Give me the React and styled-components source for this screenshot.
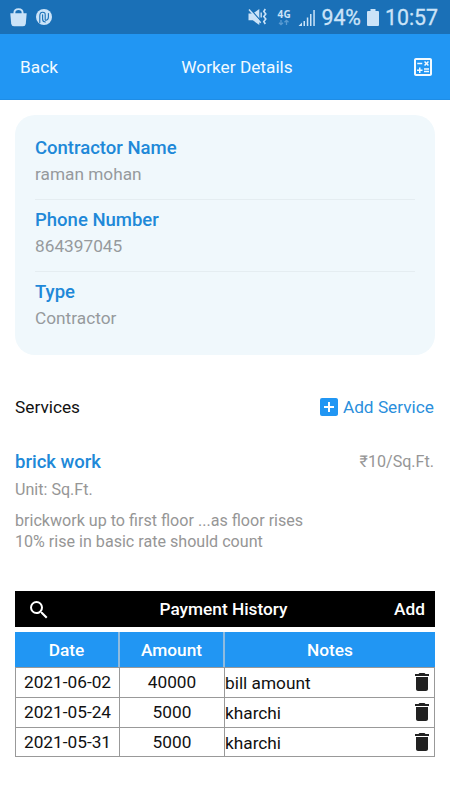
import React from "react";
import styled, { createGlobalStyle } from "styled-components";
import { MdOutlineCalculate, MdAddBox, MdSearch, MdDelete } from "react-icons/md";

const blue = "#2196f3";

const GlobalStyle = createGlobalStyle`
  * { box-sizing: border-box; }
  body {
    margin: 0;
    background: #fff;
    color: #111;
    font-family: Roboto, sans-serif;
    font-size: 17.25px;
    line-height: 20px;
  }
  svg { display: block; flex: none; }
`;

const Screen = styled.div`
  width: 450px;
  height: 800px;
  overflow: hidden;
`;

const StatusBar = styled.div`
  height: 34px;
  display: flex;
  justify-content: space-between;
  padding: 0 12px 0 10px;
  background: #1a70b7;
  color: #cbe3f8;
`;

const StatusGroup = styled.div`
  display: flex;
  align-items: center;
`;

const StatusText = styled.span`
  font-size: 21.3px;
  line-height: 34px;
  padding-top: 2px;
  -webkit-text-stroke: 0.3px currentColor;
`;

const Network = styled.div`
  width: 14px;
  margin: 0 7px 0 10px;
  font: 700 10px/10px "Open Sans", sans-serif;
  letter-spacing: 0.3px;
`;

const BatteryIcon = styled.svg`
  margin: 0 6px 0 6px;
`;

const Header = styled.header`
  height: 66px;
  display: grid;
  grid-template-columns: 1fr auto 1fr;
  align-items: center;
  padding: 0 15px 0 20px;
  background: ${blue};
  border-bottom: 1px solid #1e8de6;
  color: #f2faff;
`;

const HeaderTitle = styled.span`
  padding-left: 19px;
`;

const HeaderAction = styled.div`
  justify-self: end;
`;

const Card = styled.section`
  height: 240px;
  margin: 15px 15px 0;
  padding: 13px 20px 0;
  border-radius: 20px;
  background: #f0f8fc;
`;

const Field = styled.div`
  height: 72px;
  padding-top: 8px;
  border-bottom: ${(p) => (p.$last ? "none" : "1px solid #e5edf1")};
`;

const Heading = styled.div`
  color: #2088d8;
  font-size: 18.5px;
  font-weight: 500;
  line-height: 24px;
`;

const Value = styled.div`
  margin-top: 4px;
  color: #969a9d;
`;

const ServicesBar = styled.div`
  height: 24px;
  margin: 40px 15px 0;
  display: flex;
  align-items: center;
  justify-content: space-between;
`;

const AddService = styled.div`
  display: flex;
  align-items: center;
  gap: 2px;
  padding-right: 1px;
  color: #2b8fdc;
  svg { color: ${blue}; }
`;

const Service = styled.section`
  height: 141px;
  margin: 31px 15px 0;
  color: #969696;
  font-size: 16.1px;
  line-height: 21px;
`;

const ServiceTop = styled.div`
  display: flex;
  justify-content: space-between;
  align-items: center;
`;

const Rate = styled.span`
  padding: 0 1px 2px 0;
`;

const Unit = styled.div`
  margin: 5px 0 10px;
`;

const Description = styled.div`
  white-space: nowrap;
`;

const HistoryBar = styled.div`
  height: 36px;
  margin: 0 15px;
  padding: 0 10px 0 12px;
  display: grid;
  grid-template-columns: 1fr auto 1fr;
  align-items: center;
  background: #000;
  color: #fff;
  font-weight: 500;
  svg { margin-top: 2px; }
`;

const HistoryAdd = styled.span`
  justify-self: end;
`;

const HistoryTitle = styled.span`
  padding-right: 5px;
`;

const Table = styled.div`
  margin: 5px 15px 0;
`;

const TableRow = styled.div`
  display: grid;
  grid-template-columns: 104px 105px 1fr;
  height: 30px;
  border: 1px solid #999;
  border-top: none;
  &:last-child { height: 29px; }
`;

const TableHead = styled.div`
  display: grid;
  grid-template-columns: 105px 105px 1fr;
  height: 36px;
  background: ${blue};
  border-bottom: 1px solid #999;
  color: #fff;
  font-weight: 500;
`;

const Cell = styled.div`
  display: flex;
  align-items: flex-start;
  padding-top: 4px;
  justify-content: center;
  border-right: 1px solid #999;
`;

const HeadCell = styled(Cell)`
  padding-top: 8px;
  border-right: ${(p) => (p.$last ? "none" : "2px solid #8fbbdf")};
`;

const NoteCell = styled(Cell)`
  padding-top: 2px;
  justify-content: space-between;
  border-right: none;
  svg { color: #212121; }
`;

const Note = styled.span`
  padding-top: 3px;
`;

const fields = [
  ["Contractor Name", "raman mohan"],
  ["Phone Number", "864397045"],
  ["Type", "Contractor"],
];

const payments = [
  ["2021-06-02", "40000", "bill amount"],
  ["2021-05-24", "5000", "kharchi"],
  ["2021-05-31", "5000", "kharchi"],
];

const BagIcon = () => (
  <svg width="17" height="19" viewBox="0 0 17 19">
    <path d="M0.3 5.3H16.7L15.8 15.7Q15.5 18.2 13 18.2H4Q1.5 18.2 1.2 15.7Z" fill="currentColor" />
    <path d="M4.4 6V4.8Q4.4 1.1 8.5 1.1T12.6 4.8V6" fill="none" stroke="currentColor" strokeWidth="1.9" />
  </svg>
);

const SwirlIcon = styled.svg`
  margin-left: 9px;
`;

const Swirl = () => (
  <SwirlIcon width="16" height="16" viewBox="0 0 16 16">
    <circle cx="8" cy="8" r="8" fill="currentColor" />
    <g fill="none" stroke="#1a70b7" strokeWidth="1.1" strokeLinecap="round">
      <path d="M3.8 13.5V7Q3.8 3.2 6.6 3.2T9.2 6V10.8Q9.2 11.4 10.2 11.2Q12.4 10.8 12.4 8V4.5" />
      <path d="M6.6 5.8V10Q6.6 13 9.4 13" />
    </g>
  </SwirlIcon>
);

const MutedIcon = () => (
  <svg width="19" height="18" viewBox="0 0 19 18">
    <path d="M0.5 5.5H4.8L11.3 1V17L4.8 12.3H0.5Z" fill="currentColor" />
    <path d="M2 0.8L14 14.4" stroke="#1a70b7" strokeWidth="1.4" />
    <path d="M1 1.4L12.7 14.8" stroke="currentColor" strokeWidth="1.5" />
    <path d="M13.2 4.5V9.5" fill="none" stroke="currentColor" strokeWidth="1.4" />
    <path d="M17.3 1L15.8 3.5L17.8 6L15.8 8.5L17.8 11L15.8 13.5L17.3 16" fill="none" stroke="currentColor" strokeWidth="1.6" />
  </svg>
);

const Arrows = () => (
  <svg width="14" height="7" viewBox="0 0 14 7">
    <path d="M4 1V5.5M2 3.7L4 5.7L6 3.7M9.5 6V1.5M7.5 3.3L9.5 1.3L11.5 3.3" fill="none" stroke="#5a9bd2" strokeWidth="1.3" />
  </svg>
);

const SignalIcon = styled.svg`
  margin-right: 5px;
`;

export default function App() {
  return (
    <Screen>
      <GlobalStyle />
      <StatusBar>
        <StatusGroup>
          <BagIcon />
          <Swirl />
        </StatusGroup>
        <StatusGroup>
          <MutedIcon />
          <Network>4G<Arrows /></Network>
          <SignalIcon width="18" height="17" viewBox="0 0 18 17">
            <path d="M0.5 17L4 13.5V17ZM5.5 12H7V17H5.5ZM8.8 8.5H10.3V17H8.8ZM12 5H13.5V17H12ZM15.3 1H16.8V17H15.3Z" fill="currentColor" />
          </SignalIcon>
          <StatusText>94%</StatusText>
          <BatteryIcon width="12" height="17" viewBox="0 0 12 17">
            <path d="M3.5 0H8.5V2H11Q12 2 12 3V16Q12 17 11 17H1Q0 17 0 16V3Q0 2 1 2H3.5Z" fill="currentColor" />
          </BatteryIcon>
          <StatusText>10:57</StatusText>
        </StatusGroup>
      </StatusBar>
      <Header>
        <span>Back</span>
        <HeaderTitle>Worker Details</HeaderTitle>
        <HeaderAction><MdOutlineCalculate size={24} /></HeaderAction>
      </Header>
      <Card>
        {fields.map(([label, value], i) => (
          <Field key={label} $last={i === 2}>
            <Heading>{label}</Heading>
            <Value>{value}</Value>
          </Field>
        ))}
      </Card>
      <ServicesBar>
        <span>Services</span>
        <AddService><MdAddBox size={24} />Add Service</AddService>
      </ServicesBar>
      <Service>
        <ServiceTop>
          <Heading>brick work</Heading>
          <Rate>₹10/Sq.Ft.</Rate>
        </ServiceTop>
        <Unit>Unit: Sq.Ft.</Unit>
        <Description>
          brickwork up to first floor ...as floor rises
          <br />
          10% rise in basic rate should count
        </Description>
      </Service>
      <HistoryBar>
        <MdSearch size={24} />
        <HistoryTitle>Payment History</HistoryTitle>
        <HistoryAdd>Add</HistoryAdd>
      </HistoryBar>
      <Table>
        <TableHead>
          <HeadCell>Date</HeadCell>
          <HeadCell>Amount</HeadCell>
          <HeadCell $last>Notes</HeadCell>
        </TableHead>
        {payments.map(([date, amount, note]) => (
          <TableRow key={date}>
            <Cell>{date}</Cell>
            <Cell>{amount}</Cell>
            <NoteCell><Note>{note}</Note><MdDelete size={24} /></NoteCell>
          </TableRow>
        ))}
      </Table>
    </Screen>
  );
}
